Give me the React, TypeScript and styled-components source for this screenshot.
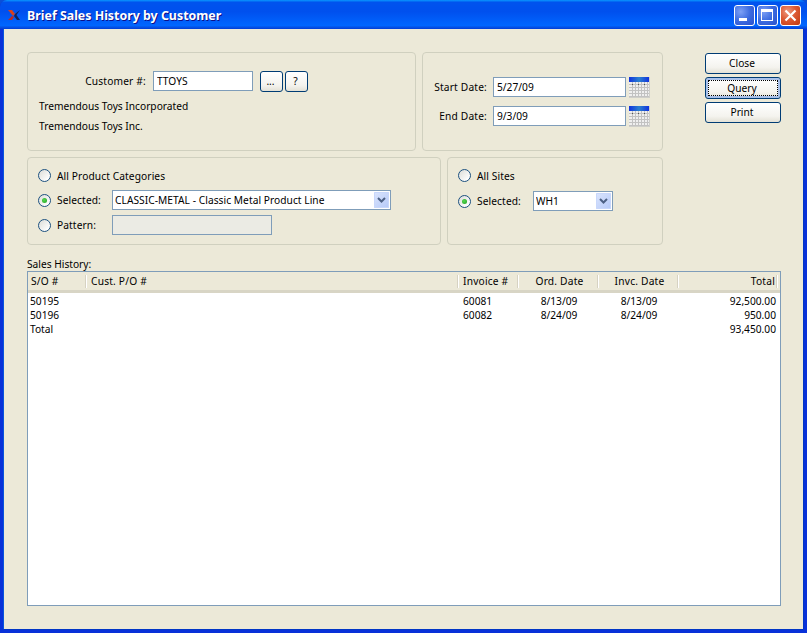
import React from "react";
import styled, { createGlobalStyle } from "styled-components";

const Global = createGlobalStyle`
  html, body { margin: 0; padding: 0; background: #0a4fd8; }
  body { width: 807px; height: 633px; overflow: hidden; font-family: "Noto Sans", "DejaVu Sans", sans-serif; font-size: 10.2px; color: #000; }
`;

const Win = styled.div`
  width: 807px; height: 633px; display: flex; flex-direction: column; box-sizing: border-box;
  background: #0831d9; border-radius: 7px 7px 0 0; overflow: hidden;
`;
const TitleBar = styled.div`
  height: 29px; flex: none; display: flex; align-items: center; box-sizing: border-box; padding: 1px 6px 0 7px;
  background: linear-gradient(180deg, #0997ff 0, #0053ee 8%, #0050ee 40%, #0066ff 88%, #0555e8 93%, #003dd7 100%);
`;
const Title = styled.div`
  margin-left: 6px; flex: 1; color: #fff; font: bold 12.4px "Noto Sans", sans-serif; text-shadow: 1px 1px #0f1089; white-space: nowrap;
`;
const WinBtn = styled.div<{ $close?: boolean }>`
  width: 21px; height: 21px; margin-left: 2px; box-sizing: border-box; border: 1px solid #fff; border-radius: 3px;
  display: flex; align-items: center; justify-content: center;
  background: ${p => p.$close
    ? "radial-gradient(circle at 35% 30%, #ee9a80 0, #dc5a34 45%, #c0380e 100%)"
    : "radial-gradient(circle at 30% 30%, #7da0f5 0, #3c6be0 50%, #2a50cc 100%)"};
`;
const Frame = styled.div`
  flex: 1; margin: 0 4px 4px; background: #ece9d8; display: flex; flex-direction: column; box-sizing: border-box;
  padding: 23px 22px 23px 23px; min-height: 0;
  box-shadow: -1px 0 #0855dd, 1px 0 #0035c5, 0 1px #0035c5;
`;
const Top = styled.div` display: flex; gap: 42px; `;
const Panels = styled.div`
  width: 636px; display: grid; grid-template-columns: 389px 6px 19px 6px 216px; grid-template-rows: 99px 88px; row-gap: 6px;
`;
const Group = styled.div<{ $col: string }>`
  grid-column: ${p => p.$col}; box-sizing: border-box; border: 1px solid #d0d0bf; border-radius: 4px; min-width: 0;
`;
const CustomerGroup = styled(Group)` padding: 18px 11px 0; `;
const DatesGroup = styled(Group)` padding: 24px 0 0 11px; display: flex; flex-direction: column; gap: 9px; `;
const OptionsGroup = styled(Group)` padding: 5px 0 0 10px; `;
const Row = styled.div<{ $h?: number }>` display: flex; align-items: center; height: ${p => p.$h ?? 25}px; `;
const FieldLabel = styled.label<{ $w: number }>` width: ${p => p.$w}px; text-align: right; flex: none; white-space: nowrap; letter-spacing: 0.18px; `;
const Text = styled.div<{ $mt?: number }>` height: 20px; line-height: 20px; white-space: nowrap; margin-top: ${p => p.$mt ?? 0}px; `;
const Input = styled.input<{ $w: number; $ml?: number }>`
  width: ${p => p.$w}px; height: 20px; box-sizing: border-box; flex: none; margin: 0 0 0 ${p => p.$ml ?? 6}px; padding: 0 3px; border: 1px solid #7f9db9; border-radius: 0;
  background: #fff; font: inherit; color: #000; outline: none;
  &:disabled { background: #ebebe4; }
`;
const XpButton = styled.button<{ $focus?: boolean; $w?: number; $h?: number; $ml?: number }>`
  width: ${p => p.$w ?? 76}px; height: ${p => p.$h ?? 21}px; margin: 0 0 0 ${p => p.$ml ?? 0}px; padding: 0 2px 1px 0; box-sizing: border-box; position: relative; flex: none;
  border: 1px solid #003c74; border-radius: 3px; font: inherit; color: #000;
  background: linear-gradient(180deg, #fff 0, #f4f3ee 70%, #e3e1d6 100%);
  ${p => p.$focus ? `box-shadow: inset 0 0 0 2px #a9c1ea; outline: 1px dotted #000; outline-offset: -4px;` : ""}
`;
const Actions = styled.div` width: 76px; padding-top: 1px; display: flex; flex-direction: column; gap: 3px; `;
const Radio = styled.span<{ $on?: boolean }>`
  width: 13px; height: 13px; flex: none; box-sizing: border-box; border-radius: 50%; border: 1px solid #1c5180; margin-right: 6px; position: relative;
  background: linear-gradient(135deg, #dcdcd7 0, #fff 85%);
  &::after { content: ""; display: ${p => p.$on ? "block" : "none"}; position: absolute; left: 3px; top: 3px; width: 5px; height: 5px; border-radius: 50%; background: radial-gradient(circle at 40% 40%, #55d751, #21a121); }
`;
const RadioLabel = styled.span<{ $w?: number }>` ${p => p.$w ? `width: ${p.$w}px; flex: none;` : ""} white-space: nowrap; letter-spacing: 0.1px; `;
const Combo = styled.div<{ $w: number }>`
  width: ${p => p.$w}px; height: 20px; box-sizing: border-box; border: 1px solid #7f9db9; background: #fff; display: flex; align-items: center; padding-left: 2px; flex: none;
`;
const ComboText = styled.span` flex: 1; white-space: nowrap; overflow: hidden; letter-spacing: 0.05px; `;
const ComboArrow = styled.span`
  width: 15px; height: 16px; margin-right: 1px; border-radius: 1px; display: flex; align-items: center; justify-content: center; flex: none;
  background: linear-gradient(135deg, #dbe5fd 0, #b5c9f8 100%); box-shadow: inset 0 0 0 1px #c8d7fb;
`;
const SectionLabel = styled.div` margin-top: 12px; height: 14px; line-height: 14px; white-space: nowrap; `;
const TableBox = styled.div` flex: 1; min-height: 0; border: 1px solid #7f9db9; background: #fff; `;
const COLS = "59px 372px 60px 80px 80px 99px";
const Head = styled.div`
  display: grid; grid-template-columns: ${COLS}; height: 21px; box-sizing: border-box; background: #ece9d8; padding-bottom: 3px;
  box-shadow: inset 0 -3px #d8d5c5, inset 0 -1px #cbc7b8;
`;
const HeadCell = styled.div<{ $align?: string }>`
  padding: 0 3px 0 ${p => p.$align ? 4 : 3}px; text-align: ${p => p.$align ?? "left"}; line-height: 17px; white-space: nowrap; position: relative; margin-top: 1px; letter-spacing: 0.2px;
  &::after { content: ""; position: absolute; right: 0; top: 2px; bottom: 2px; width: 2px; background: linear-gradient(90deg, #d6d2c2 50%, #fff 50%); }
`;
const HeadInset = styled(HeadCell)` padding-left: 4px; `;
const BodyRow = styled.div` display: grid; grid-template-columns: ${COLS}; height: 14px; line-height: 14px; `;
const BodyWrap = styled.div` padding-top: 1px; `;
const Cell = styled.div<{ $align?: string }>` padding: 0 2px 0 2px; text-align: ${p => p.$align ?? "left"}; white-space: nowrap; `;
const InvCell = styled(Cell)` padding-left: 4px; `;
const CalIcon = styled.svg` margin-left: 3px; flex: none; `;

const Cal = () => (
  <CalIcon width="21" height="21" viewBox="0 0 21 21">
    <defs>
      <linearGradient id="calTop" x1="0" x2="1" y1="0" y2="0">
        <stop offset="0" stopColor="#1133dd" />
        <stop offset="0.5" stopColor="#2a80d0" />
        <stop offset="1" stopColor="#1133dd" />
      </linearGradient>
    </defs>
    <rect width="21" height="21" fill="#cfcfca" />
    <rect x="0" y="0" width="20" height="5" fill="url(#calTop)" />
    <rect x="0" y="5" width="20" height="15" fill="#efefef" />
    {[3, 6, 9, 12, 15, 18].map(x => <rect key={x} x={x} y="5" width="1" height="15" fill="#c2c2c2" />)}
    {[7, 10, 13, 16, 19].map(y => <rect key={y} x="0" y={y} width="20" height="1" fill="#c2c2c2" />)}
    {[3, 9, 15].map(x => <rect key={x} x={x} y="7" width="1" height="1" fill="#555" />)}
  </CalIcon>
);
const Chevron = () => (
  <svg width="9" height="6" viewBox="0 0 9 6"><path d="M1 1l3.5 3.5L8 1" fill="none" stroke="#4d6185" strokeWidth="2" /></svg>
);

export default function App() {
  return (
    <Win>
      <Global />
      <TitleBar>
        <svg width="14" height="12" viewBox="0 0 14 12">
          <path d="M1 1h4l3 4-2 2z" fill="#d8401c" />
          <path d="M1 11l4-4 2 1-2 3z" fill="#c0281c" />
          <path d="M13 1L8 5 7 7l3 4h3L9.5 6z" fill="#10245c" />
        </svg>
        <Title>Brief Sales History by Customer</Title>
        <WinBtn>
          <svg width="19" height="19" viewBox="0 0 19 19"><rect x="4" y="12" width="8" height="3" fill="#fff" /></svg>
        </WinBtn>
        <WinBtn>
          <svg width="19" height="19" viewBox="0 0 19 19"><path d="M3 3h12v12H3z M4 6v8h10V6z" fill="#fff" fillRule="evenodd" /></svg>
        </WinBtn>
        <WinBtn $close>
          <svg width="19" height="19" viewBox="0 0 19 19"><path d="M4.5 4.5l10 10M14.5 4.5l-10 10" stroke="#fff" strokeWidth="2.2" /></svg>
        </WinBtn>
      </TitleBar>
      <Frame>
        <Top>
          <Panels>
            <CustomerGroup $col="1 / 2">
              <Row $h={20}>
                <FieldLabel $w={107}>Customer #:</FieldLabel>
                <Input $w={100} $ml={7} defaultValue="TTOYS" readOnly />
                <XpButton $w={23} $ml={7} $h={21}>...</XpButton>
                <XpButton $w={23} $ml={2} $h={21}>?</XpButton>
              </Row>
              <Text $mt={5}>Tremendous Toys Incorporated</Text>
              <Text>Tremendous Toys Inc.</Text>
            </CustomerGroup>
            <DatesGroup $col="3 / 6">
              <Row $h={20}>
                <FieldLabel $w={53}>Start Date:</FieldLabel>
                <Input $w={133} defaultValue="5/27/09" readOnly />
                <Cal />
              </Row>
              <Row $h={20}>
                <FieldLabel $w={53}>End Date:</FieldLabel>
                <Input $w={133} defaultValue="9/3/09" readOnly />
                <Cal />
              </Row>
            </DatesGroup>
            <OptionsGroup $col="1 / 4">
              <Row><Radio /><RadioLabel>All Product Categories</RadioLabel></Row>
              <Row $h={24}>
                <Radio $on /><RadioLabel $w={55}>Selected:</RadioLabel>
                <Combo $w={279}><ComboText>CLASSIC-METAL - Classic Metal Product Line</ComboText><ComboArrow><Chevron /></ComboArrow></Combo>
              </Row>
              <Row $h={26}>
                <Radio /><RadioLabel $w={55}>Pattern:</RadioLabel>
                <Input $w={160} $ml={0} disabled />
              </Row>
            </OptionsGroup>
            <OptionsGroup $col="5 / 6">
              <Row><Radio /><RadioLabel>All Sites</RadioLabel></Row>
              <Row $h={26}>
                <Radio $on /><RadioLabel $w={56}>Selected:</RadioLabel>
                <Combo $w={80}><ComboText>WH1</ComboText><ComboArrow><Chevron /></ComboArrow></Combo>
              </Row>
            </OptionsGroup>
          </Panels>
          <Actions>
            <XpButton>Close</XpButton>
            <XpButton $focus $h={22}>Query</XpButton>
            <XpButton>Print</XpButton>
          </Actions>
        </Top>
        <SectionLabel>Sales History:</SectionLabel>
        <TableBox>
          <Head>
            <HeadCell>S/O #</HeadCell>
            <HeadInset>Cust. P/O #</HeadInset>
            <HeadInset>Invoice #</HeadInset>
            <HeadCell $align="center">Ord. Date</HeadCell>
            <HeadCell $align="center">Invc. Date</HeadCell>
            <HeadCell $align="right">Total</HeadCell>
          </Head>
          <BodyWrap>
            {[
              ["50195", "", "60081", "8/13/09", "8/13/09", "92,500.00"],
              ["50196", "", "60082", "8/24/09", "8/24/09", "950.00"],
              ["Total", "", "", "", "", "93,450.00"],
            ].map(r => (
              <BodyRow key={r[0]}>
                <Cell>{r[0]}</Cell>
                <Cell>{r[1]}</Cell>
                <InvCell>{r[2]}</InvCell>
                <Cell $align="center">{r[3]}</Cell>
                <Cell $align="center">{r[4]}</Cell>
                <Cell $align="right">{r[5]}</Cell>
              </BodyRow>
            ))}
          </BodyWrap>
        </TableBox>
      </Frame>
    </Win>
  );
}
